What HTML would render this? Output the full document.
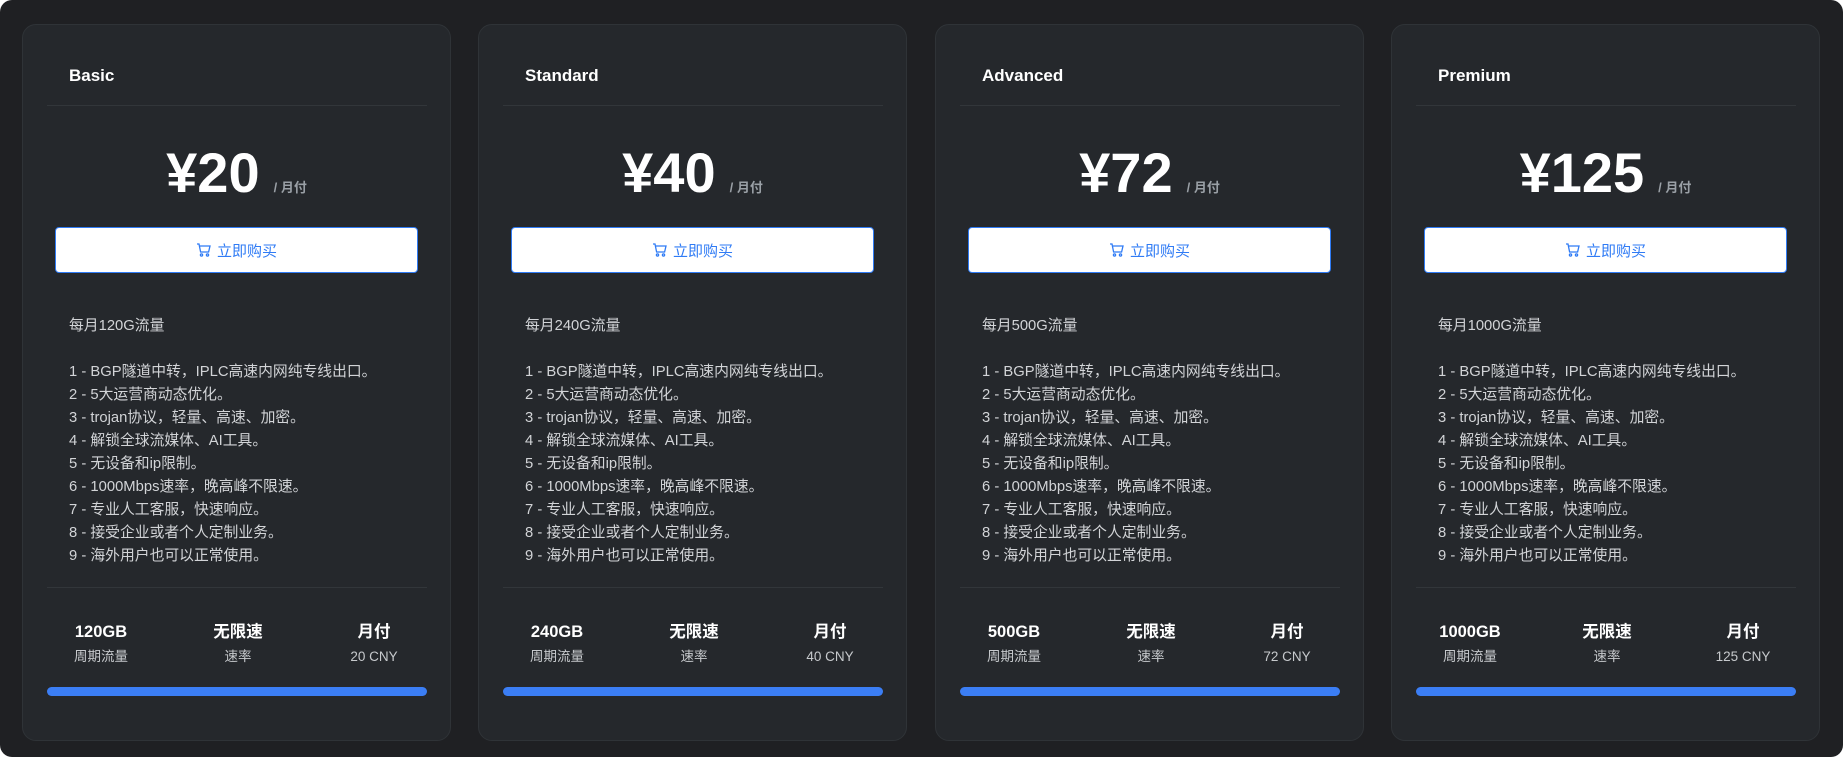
<!DOCTYPE html>
<html><head><meta charset="utf-8"><style>
*{margin:0;padding:0;box-sizing:border-box}
body{width:1843px;height:760px;background:#fff;font-family:"Liberation Sans","Noto Sans CJK SC",sans-serif;overflow:hidden;position:relative}
.wrap{position:absolute;left:0;top:0;width:1843px;height:757px;background:#1f2023;border-radius:12px}
.card{position:absolute;top:24px;width:429px;height:717px;background:#25282c;border:1px solid #2f3337;border-radius:14px}
.title{position:absolute;left:46px;top:41px;font-size:17px;font-weight:bold;color:#fff}
.hr{position:absolute;left:24px;right:23px;height:1px;background:#32363a}
.price{position:absolute;left:0;right:0;top:115px;text-align:center;color:#fff;white-space:nowrap}
.price b{font-size:56px;font-weight:bold}
.price span{font-size:13px;color:#9aa0a6;margin-left:14px;font-weight:bold}
.btn{position:absolute;left:32px;top:202px;width:363px;height:46px;background:#fff;border:1.5px solid #2f7bf5;border-radius:4px;color:#2f7bf5;font-size:15px;display:flex;align-items:center;justify-content:center;gap:6px}
.feat{position:absolute;left:46px;top:290px;font-size:14.8px;line-height:23px;color:#d2d4d7;white-space:nowrap}
.st{position:absolute;top:597px;width:120px;text-align:center}
.st .v{font-size:16.5px;font-weight:bold;color:#fff;line-height:20px}
.st .l{font-size:13.5px;color:#c7cacd;margin-top:6px;line-height:18px}
.bar{position:absolute;left:24px;right:23px;top:662px;height:9px;border-radius:5px;background:#3b7ef5}
</style></head><body><div class="wrap">

<div class="card" style="left:22px">
<div class="title">Basic</div><div class="hr" style="top:80px"></div>
<div class="price"><b>¥20</b><span>/ 月付</span></div>
<div class="btn"><svg width="15" height="14" viewBox="0 0 15 14" fill="none" stroke="#2f7bf5" stroke-width="1.3"><path d="M1 1h2l1.6 8h8l1.4-6H4"/><circle cx="5.5" cy="12" r="1.1"/><circle cx="11.5" cy="12" r="1.1"/></svg>立即购买</div>
<div class="feat">每月120G流量<br><br>1 - BGP隧道中转，IPLC高速内网纯专线出口。<br>2 - 5大运营商动态优化。<br>3 - trojan协议，轻量、高速、加密。<br>4 - 解锁全球流媒体、AI工具。<br>5 - 无设备和ip限制。<br>6 - 1000Mbps速率，晚高峰不限速。<br>7 - 专业人工客服，快速响应。<br>8 - 接受企业或者个人定制业务。<br>9 - 海外用户也可以正常使用。</div>
<div class="hr" style="top:562px"></div>
<div class="st" style="left:18px"><div class="v">120GB</div><div class="l">周期流量</div></div>
<div class="st" style="left:155px"><div class="v">无限速</div><div class="l">速率</div></div>
<div class="st" style="left:291px"><div class="v">月付</div><div class="l">20 CNY</div></div>
<div class="bar"></div>
</div>

<div class="card" style="left:478px">
<div class="title">Standard</div><div class="hr" style="top:80px"></div>
<div class="price"><b>¥40</b><span>/ 月付</span></div>
<div class="btn"><svg width="15" height="14" viewBox="0 0 15 14" fill="none" stroke="#2f7bf5" stroke-width="1.3"><path d="M1 1h2l1.6 8h8l1.4-6H4"/><circle cx="5.5" cy="12" r="1.1"/><circle cx="11.5" cy="12" r="1.1"/></svg>立即购买</div>
<div class="feat">每月240G流量<br><br>1 - BGP隧道中转，IPLC高速内网纯专线出口。<br>2 - 5大运营商动态优化。<br>3 - trojan协议，轻量、高速、加密。<br>4 - 解锁全球流媒体、AI工具。<br>5 - 无设备和ip限制。<br>6 - 1000Mbps速率，晚高峰不限速。<br>7 - 专业人工客服，快速响应。<br>8 - 接受企业或者个人定制业务。<br>9 - 海外用户也可以正常使用。</div>
<div class="hr" style="top:562px"></div>
<div class="st" style="left:18px"><div class="v">240GB</div><div class="l">周期流量</div></div>
<div class="st" style="left:155px"><div class="v">无限速</div><div class="l">速率</div></div>
<div class="st" style="left:291px"><div class="v">月付</div><div class="l">40 CNY</div></div>
<div class="bar"></div>
</div>

<div class="card" style="left:935px">
<div class="title">Advanced</div><div class="hr" style="top:80px"></div>
<div class="price"><b>¥72</b><span>/ 月付</span></div>
<div class="btn"><svg width="15" height="14" viewBox="0 0 15 14" fill="none" stroke="#2f7bf5" stroke-width="1.3"><path d="M1 1h2l1.6 8h8l1.4-6H4"/><circle cx="5.5" cy="12" r="1.1"/><circle cx="11.5" cy="12" r="1.1"/></svg>立即购买</div>
<div class="feat">每月500G流量<br><br>1 - BGP隧道中转，IPLC高速内网纯专线出口。<br>2 - 5大运营商动态优化。<br>3 - trojan协议，轻量、高速、加密。<br>4 - 解锁全球流媒体、AI工具。<br>5 - 无设备和ip限制。<br>6 - 1000Mbps速率，晚高峰不限速。<br>7 - 专业人工客服，快速响应。<br>8 - 接受企业或者个人定制业务。<br>9 - 海外用户也可以正常使用。</div>
<div class="hr" style="top:562px"></div>
<div class="st" style="left:18px"><div class="v">500GB</div><div class="l">周期流量</div></div>
<div class="st" style="left:155px"><div class="v">无限速</div><div class="l">速率</div></div>
<div class="st" style="left:291px"><div class="v">月付</div><div class="l">72 CNY</div></div>
<div class="bar"></div>
</div>

<div class="card" style="left:1391px">
<div class="title">Premium</div><div class="hr" style="top:80px"></div>
<div class="price"><b>¥125</b><span>/ 月付</span></div>
<div class="btn"><svg width="15" height="14" viewBox="0 0 15 14" fill="none" stroke="#2f7bf5" stroke-width="1.3"><path d="M1 1h2l1.6 8h8l1.4-6H4"/><circle cx="5.5" cy="12" r="1.1"/><circle cx="11.5" cy="12" r="1.1"/></svg>立即购买</div>
<div class="feat">每月1000G流量<br><br>1 - BGP隧道中转，IPLC高速内网纯专线出口。<br>2 - 5大运营商动态优化。<br>3 - trojan协议，轻量、高速、加密。<br>4 - 解锁全球流媒体、AI工具。<br>5 - 无设备和ip限制。<br>6 - 1000Mbps速率，晚高峰不限速。<br>7 - 专业人工客服，快速响应。<br>8 - 接受企业或者个人定制业务。<br>9 - 海外用户也可以正常使用。</div>
<div class="hr" style="top:562px"></div>
<div class="st" style="left:18px"><div class="v">1000GB</div><div class="l">周期流量</div></div>
<div class="st" style="left:155px"><div class="v">无限速</div><div class="l">速率</div></div>
<div class="st" style="left:291px"><div class="v">月付</div><div class="l">125 CNY</div></div>
<div class="bar"></div>
</div>

</div></body></html>
